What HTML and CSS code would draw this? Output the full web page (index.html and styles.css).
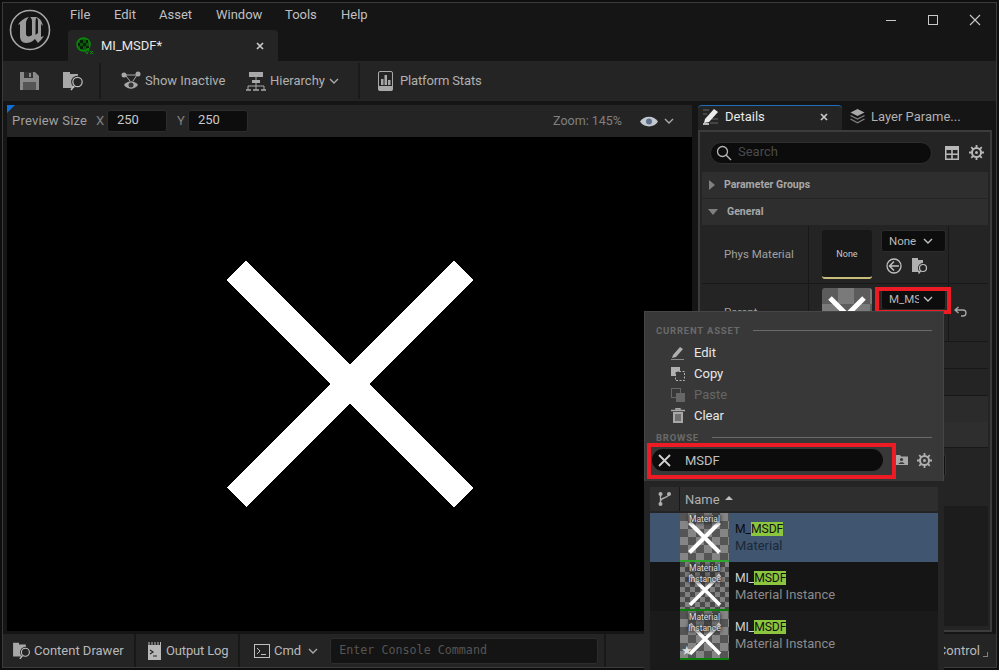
FILE: index.html
```html
<!DOCTYPE html>
<html lang="en">
<head>
  <meta charset="UTF-8">
  <title>MI_MSDF</title>
  <link rel="stylesheet" href="styles.css">
</head>
<body>
  <div class="window">
    <div class="titlebar">
      <div class="logo">
        <svg width="42" height="42" viewBox="0 0 42 42">
          <circle cx="21" cy="21" r="19.5" fill="none" stroke="#a8a8a8" stroke-width="1.6"/>
          <path d="M9 16C11 12 15 9 20 8C18 10 17 12 17 14V25C17 28 21 28 23 26V12C23 10 22 9 21 8C24 8 26 8 28 8C27 9 26.500 11 26.500 13V26L29 24V12C29 10 28 9 27 8C31 9 33 12 34 17L32 15V28L35 27C33 30 31 32 29 34L26 30C23 33 20 34 17 34C13 34 11 31 11 27V15z" fill="#9a9a9a"/>
        </svg>
      </div>
      <div class="title-main">
        <div class="menu">
          <span>File</span><span>Edit</span><span>Asset</span><span>Window</span><span>Tools</span><span>Help</span>
        </div>
        <div class="doc-tab">
          <svg class="doc-icon" width="18" height="18" viewBox="0 0 18 18">
            <circle cx="7.500" cy="7.500" r="6.500" fill="#0a5c0a" stroke="#0a8a0a" stroke-width="1.500"/>
            <path d="M4 3h3v3H4zM10 3h2v3h-2zM7 6h3v3H7zM2 6h2v3H2zM4 9h3v3H4zM10 9h3v2h-3z" fill="#0a1f0a"/>
            <path d="M9 14l2 3 2-5M14 14l3 3M17 14l-3 3" fill="none" stroke="#0a8a0a" stroke-width="1"/>
          </svg>
          <span class="doc-name">MI_MSDF*</span>
          <svg class="x-small" width="8" height="8" viewBox="0 0 8 8"><path d="M1 1l6 6M7 1l-6 6" stroke="#c8c8c8" stroke-width="1.7"/></svg>
        </div>
      </div>
      <div class="win-controls">
        <svg width="12" height="12" viewBox="0 0 12 12"><path d="M1 6.500h10" stroke="#c8c8c8" stroke-width="1"/></svg>
        <svg width="12" height="12" viewBox="0 0 12 12"><rect x="1.500" y="1.500" width="9" height="9" fill="none" stroke="#c8c8c8"/></svg>
        <svg width="12" height="12" viewBox="0 0 12 12"><path d="M1 1l10 10M11 1L1 11" stroke="#c8c8c8" stroke-width="1.100"/></svg>
      </div>
    </div>

    <div class="toolbar">
      <div class="tool-group first">
        <svg width="19" height="18" viewBox="0 0 19 18"><path d="M0 0h15l4 4v14H0z" fill="#8a8a8a"/><rect x="4" y="0" width="9" height="6" fill="#333"/><rect x="9" y="1" width="2" height="4" fill="#8a8a8a"/><rect x="3" y="10" width="13" height="8" fill="#555"/></svg>
        <svg width="21" height="20" viewBox="0 0 21 20"><path d="M0 3h7V1H0zM0 3h15v14H0z" fill="#a8a8a8"/><circle cx="14.500" cy="11" r="6.300" fill="#242424"/><circle cx="14.500" cy="11" r="4.700" fill="none" stroke="#c0c0c0" stroke-width="1.200"/><path d="M11 15l-3 4" stroke="#c0c0c0" stroke-width="1.500"/></svg>
      </div>
      <div class="tool-group second">
        <div class="tool show-inactive">
          <svg width="20" height="20" viewBox="0 0 20 20"><circle cx="3" cy="4" r="2.500" fill="#a8a8a8"/><circle cx="17" cy="3" r="2.500" fill="#a8a8a8"/><path d="M3 4h14M5 5l4 5M16 4l-4 6" stroke="#a8a8a8"/><path d="M3 14c4-5 10-5 14 0-4 5-10 5-14 0z" fill="#a8a8a8"/><circle cx="10" cy="14" r="2.500" fill="#333"/></svg>
          <span>Show Inactive</span>
        </div>
        <div class="tool hierarchy">
          <svg width="20" height="19" viewBox="0 0 20 19"><rect x="3" y="0" width="14" height="5" fill="#a8a8a8"/><rect x="6" y="8" width="8" height="3" fill="#a8a8a8"/><path d="M10 5v9M2 14h16M2 14v4M10 14v4M18 14v4" stroke="#a8a8a8"/><path d="M0 18h5M7 18h6M15 18h5" stroke="#a8a8a8" stroke-width="1.600"/></svg>
          <span>Hierarchy</span>
          <svg class="chev" width="10" height="6" viewBox="0 0 10 6"><path d="M1 1l4 4 4-4" fill="none" stroke="#a8a8a8" stroke-width="1.400"/></svg>
        </div>
      </div>
      <div class="tool-group third">
        <div class="tool">
          <svg width="15" height="20" viewBox="0 0 15 20"><rect x=".5" y=".5" width="14" height="19" rx="1.500" fill="none" stroke="#a8a8a8"/><rect x=".5" y="15" width="14" height="4.500" fill="#a8a8a8"/><rect x="3" y="8" width="2.500" height="6" fill="#a8a8a8"/><rect x="6.500" y="4" width="2.500" height="10" fill="#a8a8a8"/><rect x="10" y="9" width="2.500" height="5" fill="#a8a8a8"/></svg>
          <span>Platform Stats</span>
        </div>
      </div>
    </div>

    <div class="main">
      <div class="preview">
        <div class="corner"></div>
        <div class="preview-bar">
          <span class="size-label">Preview Size</span>
          <span class="axis x">X</span>
          <span class="num">250</span>
          <span class="axis y">Y</span>
          <span class="num">250</span>
          <span class="zoom">Zoom: 145%</span>
          <svg class="eye" width="18" height="11" viewBox="0 0 18 11"><path d="M0 5.500C4-1 14-1 18 5.500 14 12 4 12 0 5.500z" fill="#c4c8cf"/><circle cx="9" cy="5.500" r="3" fill="#5d6f8f"/></svg>
          <svg class="chev" width="10" height="6" viewBox="0 0 10 6"><path d="M1 1l4 4 4-4" fill="none" stroke="#a8a8a8" stroke-width="1.400"/></svg>
        </div>
        <div class="viewport">
          <svg class="big-x" width="246" height="246" viewBox="0 0 246 246"><path d="M9.500 9.500l227 227M236.500 9.500l-227 227" stroke="#fff" stroke-width="27"/></svg>
        </div>
      </div>

      <div class="side">
        <div class="side-tabs">
          <div class="side-tab active">
            <svg width="16" height="16" viewBox="0 0 16 16"><path d="M0 1h6M0 5h4M7 14h8M8 10h7" stroke="#666"/><path d="M2 10L11 0l4 3-9 10-5 1z" fill="#ececec"/><path d="M0 15h6" stroke="#ececec" stroke-width="1.500"/></svg>
            <span>Details</span>
            <svg class="x-small" width="8" height="8" viewBox="0 0 8 8"><path d="M1 1l6 6M7 1l-6 6" stroke="#c8c8c8" stroke-width="1.700"/></svg>
          </div>
          <div class="side-tab other">
            <svg width="15" height="15" viewBox="0 0 15 15"><path d="M7.500 0l7 3.500-7 3.500-7-3.500z" fill="#a8a8a8"/><path d="M.5 6.500l7 3.500 7-3.500M.5 10l7 3.800 7-3.800" fill="none" stroke="#808080" stroke-width="1.300"/></svg>
            <span>Layer Parame...</span>
          </div>
        </div>
        <div class="details">
          <div class="search-row">
            <div class="search">
              <svg width="16" height="16" viewBox="0 0 16 16"><circle cx="6.500" cy="6.500" r="5" fill="none" stroke="#b4b4b4" stroke-width="1.300"/><path d="M10 10l5 5" stroke="#b4b4b4" stroke-width="1.400"/></svg>
              <span>Search</span>
            </div>
            <svg class="grid-icon" width="14" height="14" viewBox="0 0 14 14"><path d="M0 0h14v14H0z" fill="#b8b8b8"/><path d="M1.500 4h4.700v3.500H1.500zM7.800 4h4.700v3.500H7.800zM1.500 9h4.700v3.500H1.500zM7.800 9h4.700v3.500H7.800z" fill="#242424"/></svg>
            <svg class="gear" width="15" height="15" viewBox="0 0 15 15"><circle cx="7.500" cy="7.500" r="4.500" fill="none" stroke="#b8b8b8" stroke-width="2"/><circle cx="7.500" cy="7.500" r="1.500" fill="#b8b8b8"/><path d="M7.500 0v3M7.500 12v3M0 7.500h3M12 7.500h3M2.200 2.200l2 2M10.800 10.800l2 2M12.800 2.200l-2 2M4.200 10.800l-2 2" stroke="#b8b8b8" stroke-width="1.800"/></svg>
          </div>
          <div class="group-head"><i class="tri right"></i><span>Parameter Groups</span></div>
          <div class="group-head"><i class="tri down"></i><span>General</span></div>
          <div class="prop phys">
            <div class="prop-name"><span>Phys Material</span></div>
            <div class="prop-value">
              <div class="asset-thumb none">None</div>
              <div class="asset-side">
                <div class="combo"><span>None</span><svg width="10" height="6" viewBox="0 0 10 6"><path d="M1 1l4 4 4-4" fill="none" stroke="#c0c0c0" stroke-width="1.400"/></svg></div>
                <div class="asset-icons">
                  <svg width="16" height="16" viewBox="0 0 16 16"><circle cx="8" cy="8" r="7" fill="none" stroke="#c0c0c0" stroke-width="1.300"/><path d="M8 3.500L3.500 8 8 12.500M4 8h9" fill="none" stroke="#c0c0c0" stroke-width="1.500"/></svg>
                  <svg width="16" height="16" viewBox="0 0 16 16"><path d="M0 0h6v2h5v12H0z" fill="#b0b0b0"/><circle cx="11" cy="10" r="5" fill="#242424"/><circle cx="11" cy="10" r="3.500" fill="none" stroke="#c0c0c0" stroke-width="1.200"/><path d="M8.500 13l-2 2.500" stroke="#c0c0c0" stroke-width="1.300"/></svg>
                </div>
              </div>
            </div>
            <div class="prop-reset"></div>
          </div>
          <div class="prop parent">
            <div class="prop-name"><span>Parent</span></div>
            <div class="prop-value">
              <div class="asset-thumb parent-thumb">
                <svg width="50" height="49" viewBox="0 0 50 49"><path d="M8 10l34 34M42 10L8 44" stroke="#fff" stroke-width="5"/></svg>
              </div>
              <div class="asset-side">
                <div class="combo"><span class="cut">M_MSDF</span><svg width="10" height="6" viewBox="0 0 10 6"><path d="M1 1l4 4 4-4" fill="none" stroke="#c0c0c0" stroke-width="1.400"/></svg></div>
              </div>
            </div>
            <div class="prop-reset">
              <svg width="13" height="11" viewBox="0 0 13 11"><path d="M4.500 1L1 4l3.500 3M1 4h8a3 3 0 0 1 0 6H7" fill="none" stroke="#a8a8a8" stroke-width="1.300"/></svg>
            </div>
          </div>
          <div class="plain-row"></div>
          <div class="plain-row"></div>
          <div class="plain-row band"></div>
          <div class="plain-row head-band"></div>
          <div class="plain-row tall"><div class="ghost-box"></div></div>
          <div class="dark-block"></div>
        </div>
      </div>
    </div>

    <div class="status">
      <div class="stat drawer">
        <svg width="18" height="17" viewBox="0 0 21 20"><path d="M0 3h7V1H0zM0 3h15v14H0z" fill="#a8a8a8"/><circle cx="14.500" cy="12" r="6.300" fill="#242424"/><circle cx="14.500" cy="12" r="4.700" fill="none" stroke="#c0c0c0" stroke-width="1.300"/><path d="M11 16l-3 4" stroke="#c0c0c0" stroke-width="1.500"/></svg>
        <span>Content Drawer</span>
      </div>
      <div class="stat log">
        <svg width="13" height="18" viewBox="0 0 13 18"><path d="M0 3h13v15H0z" fill="#b8b8b8"/><path d="M1 0v3M4 0v3M7 0v3M10 0v3M12.500 0v3" stroke="#b8b8b8"/><path d="M2 8l3 2-3 2M5 14h4" fill="none" stroke="#222" stroke-width="1.200"/></svg>
        <span>Output Log</span>
      </div>
      <div class="stat cmd">
        <svg width="16" height="14" viewBox="0 0 16 14"><rect x=".5" y=".5" width="15" height="13" fill="none" stroke="#c0c0c0"/><path d="M3 4l3 3-3 3M7 10.500h5" fill="none" stroke="#c0c0c0"/></svg>
        <span>Cmd</span>
        <svg class="chev" width="10" height="6" viewBox="0 0 10 6"><path d="M1 1l4 4 4-4" fill="none" stroke="#a8a8a8" stroke-width="1.400"/></svg>
        <div class="console">Enter Console Command</div>
      </div>
      <div class="stat rest">
        <span>Source Control</span>
        <i class="resize"></i>
      </div>
    </div>
  </div>

  <div class="outline top-box"></div>

  <div class="popup">
    <div class="popup-menu">
      <div class="sec-title"><span>CURRENT ASSET</span></div>
      <div class="item">
        <svg width="14" height="14" viewBox="0 0 14 14"><path d="M2 9l7-8 3 2-7 8-4 1z" fill="#b0b0b0"/><path d="M0 13.500h13" stroke="#8a8a8a"/></svg>
        <span>Edit</span>
      </div>
      <div class="item">
        <svg width="14" height="14" viewBox="0 0 14 14"><rect x="0" y="0" width="9" height="9" fill="#b0b0b0"/><rect x="4.500" y="4.500" width="9" height="9" fill="#383838" stroke="#b0b0b0" stroke-dasharray="2 1.500"/></svg>
        <span>Copy</span>
      </div>
      <div class="item off">
        <svg width="14" height="14" viewBox="0 0 14 14"><rect x=".5" y=".5" width="9" height="9" fill="none" stroke="#666"/><rect x="5" y="5" width="9" height="9" fill="#666"/></svg>
        <span>Paste</span>
      </div>
      <div class="item">
        <svg width="14" height="15" viewBox="0 0 14 15"><path d="M0 2.500h14M5 2.500V.8h4v1.700" fill="none" stroke="#a8a8a8" stroke-width="1.400"/><path d="M2 4h10v11H2z" fill="#a8a8a8"/><path d="M5 6v7M7 6v7M9 6v7" stroke="#383838"/></svg>
        <span>Clear</span>
      </div>
      <div class="sec-title browse"><span>BROWSE</span></div>
      <div class="browse-row">
        <div class="pill">
          <svg width="13" height="13" viewBox="0 0 13 13"><path d="M1 1l11 11M12 1L1 12" stroke="#d0d0d0" stroke-width="1.800"/></svg>
          <span>MSDF</span>
        </div>
        <svg class="browse-folder" width="13" height="10" viewBox="0 0 13 10"><path d="M0 0h5l1 1.500h7V10H0z" fill="#a8a8a8"/><circle cx="6.500" cy="4.500" r="1.600" fill="#383838"/><path d="M3.500 9c.5-2.500 5.500-2.500 6 0z" fill="#383838"/></svg>
        <svg class="gear" width="15" height="15" viewBox="0 0 15 15"><circle cx="7.500" cy="7.500" r="4.500" fill="none" stroke="#b0b0b0" stroke-width="2"/><circle cx="7.500" cy="7.500" r="1.500" fill="#b0b0b0"/><path d="M7.500 0v3M7.500 12v3M0 7.500h3M12 7.500h3M2.200 2.200l2 2M10.800 10.800l2 2M12.800 2.200l-2 2M4.200 10.800l-2 2" stroke="#b0b0b0" stroke-width="1.800"/></svg>
      </div>
    </div>
    <div class="popup-list">
      <div class="list-head">
        <div class="branch">
          <svg width="14" height="14" viewBox="0 0 14 14"><circle cx="2.500" cy="2" r="2" fill="#b0b0b0"/><circle cx="11" cy="2" r="2" fill="#b0b0b0"/><circle cx="2.500" cy="12" r="2" fill="#b0b0b0"/><path d="M2.500 2v10M11 2c0 4-8 3-8.500 7" fill="none" stroke="#b0b0b0" stroke-width="1.300"/></svg>
        </div>
        <div class="name-col">Name<i class="sort"></i></div>
      </div>
      <div class="asset-row selected">
        <div class="thumb big-check light-green">
          <svg width="49" height="47" viewBox="0 0 49 47"><path d="M9.500 9.500l30 30M39.500 9.500l-30 30" stroke="#fff" stroke-width="4"/></svg>
          <span class="thumb-text">Material</span>
        </div>
        <div class="asset-text">
          <div class="asset-name">M_<mark>MSDF</mark></div>
          <div class="asset-type">Material</div>
        </div>
      </div>
      <div class="asset-row">
        <div class="thumb small-check">
          <svg width="49" height="47" viewBox="0 0 49 47"><path d="M10 13l30 30M40 13L10 43" stroke="#fff" stroke-width="3.500"/></svg>
          <span class="thumb-text">Material<br>Instance</span>
        </div>
        <div class="asset-text">
          <div class="asset-name">MI_<mark>MSDF</mark></div>
          <div class="asset-type">Material Instance</div>
        </div>
      </div>
      <div class="asset-row alt">
        <div class="thumb big-check">
          <svg width="49" height="47" viewBox="0 0 49 47"><path d="M10 13l30 30M40 13L10 43" stroke="#fff" stroke-width="3.500"/></svg>
          <span class="thumb-text">Material<br>Instance</span>
          <i class="star">★</i>
        </div>
        <div class="asset-text">
          <div class="asset-name">MI_<mark>MSDF</mark></div>
          <div class="asset-type">Material Instance</div>
        </div>
      </div>
    </div>
  </div>

  <div class="outline search-box"></div>
</body>
</html>
```

FILE: styles.css
```css
html, body {
  margin: 0;
  height: 670px;
  overflow: hidden;
}
body {
  background: #0e0e0e;
  font-family: Roboto, "Liberation Sans", sans-serif;
  font-size: 13px;
  color: #c0c0c0;
  position: relative;
}
svg {
  display: block;
  flex: none;
}
.window {
  position: absolute;
  left: 2px;
  top: 2px;
  width: 993px;
  height: 664px;
  border: 1px solid #3b3b3b;
  background: #151515;
  display: flex;
  flex-direction: column;
}

/* title bar */
.titlebar {
  height: 58px;
  display: flex;
  flex: none;
}
.logo {
  width: 65px;
  padding: 6px 0 0 6px;
  box-sizing: border-box;
}
.title-main {
  flex: 1;
}
.menu {
  height: 23px;
  margin-bottom: 4px;
  padding-left: 2px;
  display: flex;
  align-items: center;
  color: #c0c0c0;
}
.menu span:nth-child(1) { width: 44px; }
.menu span:nth-child(2) { width: 45px; }
.menu span:nth-child(3) { width: 57px; }
.menu span:nth-child(4) { width: 69px; }
.menu span:nth-child(5) { width: 56px; }
.doc-tab {
  width: 210px;
  height: 31px;
  background: #242424;
  border-radius: 4px 4px 0 0;
  display: flex;
  align-items: center;
  color: #e8e8e8;
  box-sizing: border-box;
  padding: 0 14px 0 8px;
}
.doc-name {
  margin-left: 7px;
  flex: 1;
}
.win-controls {
  display: flex;
  gap: 30px;
  padding: 11px 15px 0 0;
}

/* toolbar */
.toolbar {
  height: 40px;
  background: #242424;
  display: flex;
  flex: none;
}
.tool-group {
  display: flex;
  align-items: center;
  border-right: 2px solid #1a1a1a;
  margin: 2px 0;
  box-sizing: border-box;
}
.tool-group.first {
  width: 98px;
  padding-left: 17px;
  gap: 24px;
}
.tool-group.second {
  width: 259px;
  padding-left: 20px;
}
.tool-group.third {
  border: none;
  padding-left: 18px;
}
.tool {
  display: flex;
  align-items: center;
  gap: 4px;
  color: #b0b0b0;
}
.tool span {
  margin-bottom: 2px;
}
.show-inactive {
  width: 125px;
}
.tool-group.third .tool {
  gap: 7px;
  letter-spacing: -0.15px;
}

/* main area */
.main {
  flex: 1;
  display: flex;
  gap: 6px;
  padding: 4px 4px 2px 4px;
  min-height: 0;
}
.preview {
  width: 685px;
  display: flex;
  flex-direction: column;
  position: relative;
}
.corner {
  position: absolute;
  left: 0;
  top: 0;
  border-style: solid;
  border-width: 8px 8px 0 0;
  border-color: #0f6fd6 transparent transparent transparent;
}
.preview-bar {
  height: 32px;
  background: #242424;
  display: flex;
  align-items: center;
  padding: 0 18px 0 5px;
  flex: none;
  color: #a0a0a0;
}
.size-label {
  width: 84px;
  flex: none;
  letter-spacing: 0.2px;
  margin-bottom: 2px;
}
.axis {
  width: 11px;
  flex: none;
  color: #808080;
  margin-bottom: 2px;
}
.axis.y {
  margin-left: 10px;
}
.num {
  width: 60px;
  height: 22px;
  flex: none;
  box-sizing: border-box;
  padding-left: 9px;
  background: #0d0d0d;
  border-radius: 3px;
  border: 1px solid #2c2c2c;
  line-height: 18px;
  color: #c8c8c8;
}
.zoom {
  margin-left: auto;
  color: #808080;
  font-size: 12.5px;
  margin-bottom: 2px;
}
.eye {
  margin-left: 18px;
}
.preview-bar .chev {
  margin-left: 6px;
}
.viewport {
  flex: 1;
  background: #000;
  display: flex;
  align-items: center;
  justify-content: center;
  margin-bottom: 1px;
}
.big-x {
  shape-rendering: crispEdges;
}

/* details */
.side {
  width: 294px;
  display: flex;
  flex-direction: column;
}
.side-tabs {
  height: 25px;
  display: flex;
  flex: none;
}
.side-tab {
  display: flex;
  align-items: center;
  box-sizing: border-box;
}
.side-tab.active {
  width: 144px;
  background: #242424;
  border-top: 1px solid #1f6fb8;
  border-radius: 4px 4px 0 0;
  padding: 0 14px 3px 5px;
  color: #e8e8e8;
}
.side-tab.active span {
  margin-left: 6px;
  flex: 1;
}
.side-tab.other {
  padding: 0 0 2px 8px;
  gap: 6px;
  color: #b0b0b0;
}
.details {
  flex: 1;
  border: 2px solid #3c3c3c;
  background: #242424;
  padding: 0 2px;
  min-height: 0;
}
.search-row {
  height: 40px;
  display: flex;
  align-items: center;
  padding: 1px 0 0 8px;
  box-sizing: border-box;
}
.search {
  width: 222px;
  height: 22px;
  box-sizing: border-box;
  background: #0c0c0c;
  border: 1px solid #2e2e2e;
  border-radius: 11px;
  display: flex;
  align-items: center;
  padding-left: 5px;
  gap: 6px;
  color: #4a4a4a;
}
.search span {
  margin-bottom: 2px;
}
.grid-icon {
  margin-left: 13px;
}
.gear {
  margin-left: 10px;
}
.group-head {
  height: 26px;
  margin-bottom: 1px;
  background: #2e2e2e;
  display: flex;
  align-items: center;
  font-size: 10.5px;
  font-weight: 700;
  color: #a8a8a8;
  padding-left: 6px;
  box-sizing: border-box;
}
.group-head span {
  margin-bottom: 2px;
}
.tri {
  width: 0;
  height: 0;
  border-style: solid;
  margin-right: 9px;
}
.tri.right {
  border-width: 5px 0 5px 6px;
  border-color: transparent transparent transparent #808080;
  margin-left: 1px;
}
.tri.down {
  border-width: 6px 5px 0 5px;
  border-color: #808080 transparent transparent transparent;
}
.prop {
  display: flex;
  height: 57px;
  border-bottom: 1px solid #181818;
}
.prop-name {
  width: 107px;
  box-sizing: border-box;
  padding-left: 22px;
  display: flex;
  align-items: center;
  font-size: 11.5px;
  color: #a0a0a0;
  border-right: 1px solid #181818;
}
.prop-name span {
  margin-bottom: 2px;
}
.prop-value {
  width: 140px;
  display: flex;
  gap: 9px;
  padding: 4px 0 0 13px;
  box-sizing: border-box;
  border-right: 1px solid #181818;
}
.asset-thumb {
  width: 50px;
  height: 49px;
  flex: none;
  border-radius: 3px;
}
.asset-thumb.none {
  background: #181818;
  border-bottom: 2px solid #c9bd7a;
  box-sizing: border-box;
  font-size: 9px;
  color: #c8c8c8;
  display: flex;
  align-items: center;
  justify-content: center;
}
.parent-thumb {
  background: conic-gradient(#7a7a7a 25%, #5c5c5c 0 50%, #7a7a7a 0 75%, #5c5c5c 0) 0 0 / 32px 32px;
  overflow: hidden;
}
.combo {
  width: 65px;
  height: 22px;
  background: #0d0d0d;
  border-radius: 3px;
  border: 1px solid #2c2c2c;
  box-sizing: border-box;
  display: flex;
  align-items: center;
  justify-content: space-between;
  padding: 0 12px 0 7px;
  font-size: 11.5px;
  color: #b8b8b8;
}
.combo .cut {
  width: 30px;
  overflow: hidden;
  white-space: nowrap;
}
.asset-icons {
  display: flex;
  gap: 10px;
  padding: 6px 0 0 5px;
}
.prop-reset {
  flex: 1;
  padding: 22px 0 0 5px;
}
.plain-row {
  height: 26px;
  border-bottom: 1px solid #181818;
}
.plain-row.band {
  background: #2b2b2b;
}
.plain-row.head-band {
  background: #2e2e2e;
  height: 25px;
  margin-top: -1px;
}
.plain-row.tall {
  height: 58px;
  border: none;
  position: relative;
}
.ghost-box {
  position: absolute;
  right: 42px;
  top: 6px;
  width: 50px;
  height: 21px;
  background: #111;
  border: 1px solid #333;
  border-radius: 3px;
}
.dark-block {
  height: 120px;
  background: #1c1c1c;
}

/* status bar */
.status {
  height: 33px;
  background: #242424;
  display: flex;
  flex: none;
  color: #b8b8b8;
  font-size: 13px;
}
.stat {
  display: flex;
  align-items: center;
  height: 100%;
  box-sizing: border-box;
  border-right: 2px solid #181818;
}
.stat.drawer {
  width: 133px;
  padding-left: 10px;
  gap: 3px;
}
.stat.log {
  width: 104px;
  padding-left: 12px;
  gap: 5px;
  letter-spacing: -0.15px;
}
.stat.cmd {
  width: 366px;
  padding-left: 14px;
  gap: 4px;
}
.stat.cmd .chev {
  margin-left: 3px;
}
.console {
  margin-left: 8px;
  width: 268px;
  height: 26px;
  box-sizing: border-box;
  background: #141414;
  border: 1px solid #2c2c2c;
  border-radius: 3px;
  font-family: "DejaVu Sans Mono", monospace;
  font-size: 11.7px;
  line-height: 22px;
  padding-left: 8px;
  color: #555;
}
.stat.rest {
  flex: 1;
  border: none;
  justify-content: flex-end;
  padding-right: 8px;
  gap: 3px;
}
.resize {
  width: 4px;
  height: 4px;
  margin-top: 8px;
  border-right: 1px solid #808080;
  border-bottom: 1px solid #808080;
}

/* red marks */
.outline {
  position: absolute;
  border: 4px solid #ed1c24;
  box-sizing: border-box;
}
.top-box {
  left: 875px;
  top: 287px;
  width: 76px;
  height: 27px;
}
.search-box {
  left: 647px;
  top: 443px;
  width: 249px;
  height: 36px;
}

/* asset picker */
.popup {
  position: absolute;
  left: 644px;
  top: 311px;
  width: 300px;
  height: 359px;
  background: #242424;
  display: flex;
  flex-direction: column;
}
.popup-menu {
  height: 170px;
  flex: none;
  background: #383838;
  border: 1px solid #454545;
  border-bottom: none;
  box-sizing: border-box;
  padding: 11px 11px 0 11px;
}
.sec-title {
  height: 14px;
  display: flex;
  align-items: center;
  gap: 13px;
  font-size: 9.5px;
  font-weight: 700;
  letter-spacing: 0.8px;
  color: #6a6a6a;
}
.sec-title::after {
  content: "";
  flex: 1;
  height: 1px;
  background: #6a6a6a;
}
.sec-title.browse {
  margin-top: 4px;
}
.item {
  height: 21px;
  display: flex;
  align-items: center;
  padding-left: 15px;
  gap: 9px;
  color: #e8e8e8;
}
.item:nth-child(2) {
  margin-top: 5px;
}
.item svg {
  width: 14px;
}
.item.off {
  color: #666;
}
.browse-row {
  display: flex;
  align-items: center;
  margin: 5px 0 0 -4px;
}
.pill {
  width: 231px;
  height: 22px;
  border-radius: 11px;
  background: #0c0c0c;
  display: flex;
  align-items: center;
  padding-left: 6px;
  gap: 14px;
  box-sizing: border-box;
  color: #c0c0c0;
}
.browse-folder {
  margin-left: 12px;
}
.browse-row .gear {
  margin-left: 9px;
}
.popup-list {
  flex: 1;
  padding: 6px 6px 0 6px;
}
.list-head {
  height: 24px;
  background: #2e2e2e;
  display: flex;
  margin-bottom: 2px;
}
.branch {
  width: 30px;
  border-right: 1px solid #181818;
  display: flex;
  align-items: center;
  justify-content: center;
  box-sizing: border-box;
}
.name-col {
  padding-left: 5px;
  display: flex;
  align-items: center;
  color: #b0b0b0;
}
.sort {
  width: 0;
  height: 0;
  margin-left: 5px;
  margin-top: -2px;
  border-style: solid;
  border-width: 0 4px 4px 4px;
  border-color: transparent transparent #c0c0c0 transparent;
}
.asset-row {
  height: 49px;
  display: flex;
  background: #151515;
}
.asset-row.alt {
  background: #1a1a1a;
  height: 60px;
}
.asset-row.selected {
  background: #3f5570;
}
.thumb {
  width: 49px;
  height: 49px;
  margin-left: 30px;
  flex: none;
  position: relative;
  box-sizing: border-box;
  border-bottom: 2px solid #0a7d0a;
  overflow: hidden;
}
.thumb.light-green {
  border-bottom-color: #2ea62e;
}
.big-check {
  background: conic-gradient(#858585 25%, #555 0 50%, #858585 0 75%, #555 0) 0 0 / 16px 16px;
}
.small-check {
  background: conic-gradient(#808080 25%, #4a4a4a 0 50%, #808080 0 75%, #4a4a4a 0) 0 0 / 10px 10px;
}
.thumb-text {
  position: absolute;
  left: 0;
  right: 0;
  top: 1px;
  text-align: center;
  font-size: 8.5px;
  line-height: 11px;
  color: #ddd;
  text-shadow: 0 0 3px #333, 0 0 3px #333, 0 0 4px #333, 0 0 4px #333;
}
.star {
  position: absolute;
  left: 1px;
  bottom: 0;
  font-style: normal;
  font-size: 13px;
  line-height: 14px;
  color: #ddd;
}
.asset-text {
  padding: 8px 0 0 6px;
}
.asset-name {
  color: #d0d0d0;
  font-size: 12.2px;
  line-height: 16px;
  letter-spacing: -0.1px;
}
.asset-name mark {
  background: #8cc63f;
  color: #111;
}
.asset-type {
  color: #8a8a8a;
  line-height: 18px;
}
.selected .asset-name {
  color: #0d0d0d;
}
.selected .asset-type {
  color: #1c2836;
}
```
